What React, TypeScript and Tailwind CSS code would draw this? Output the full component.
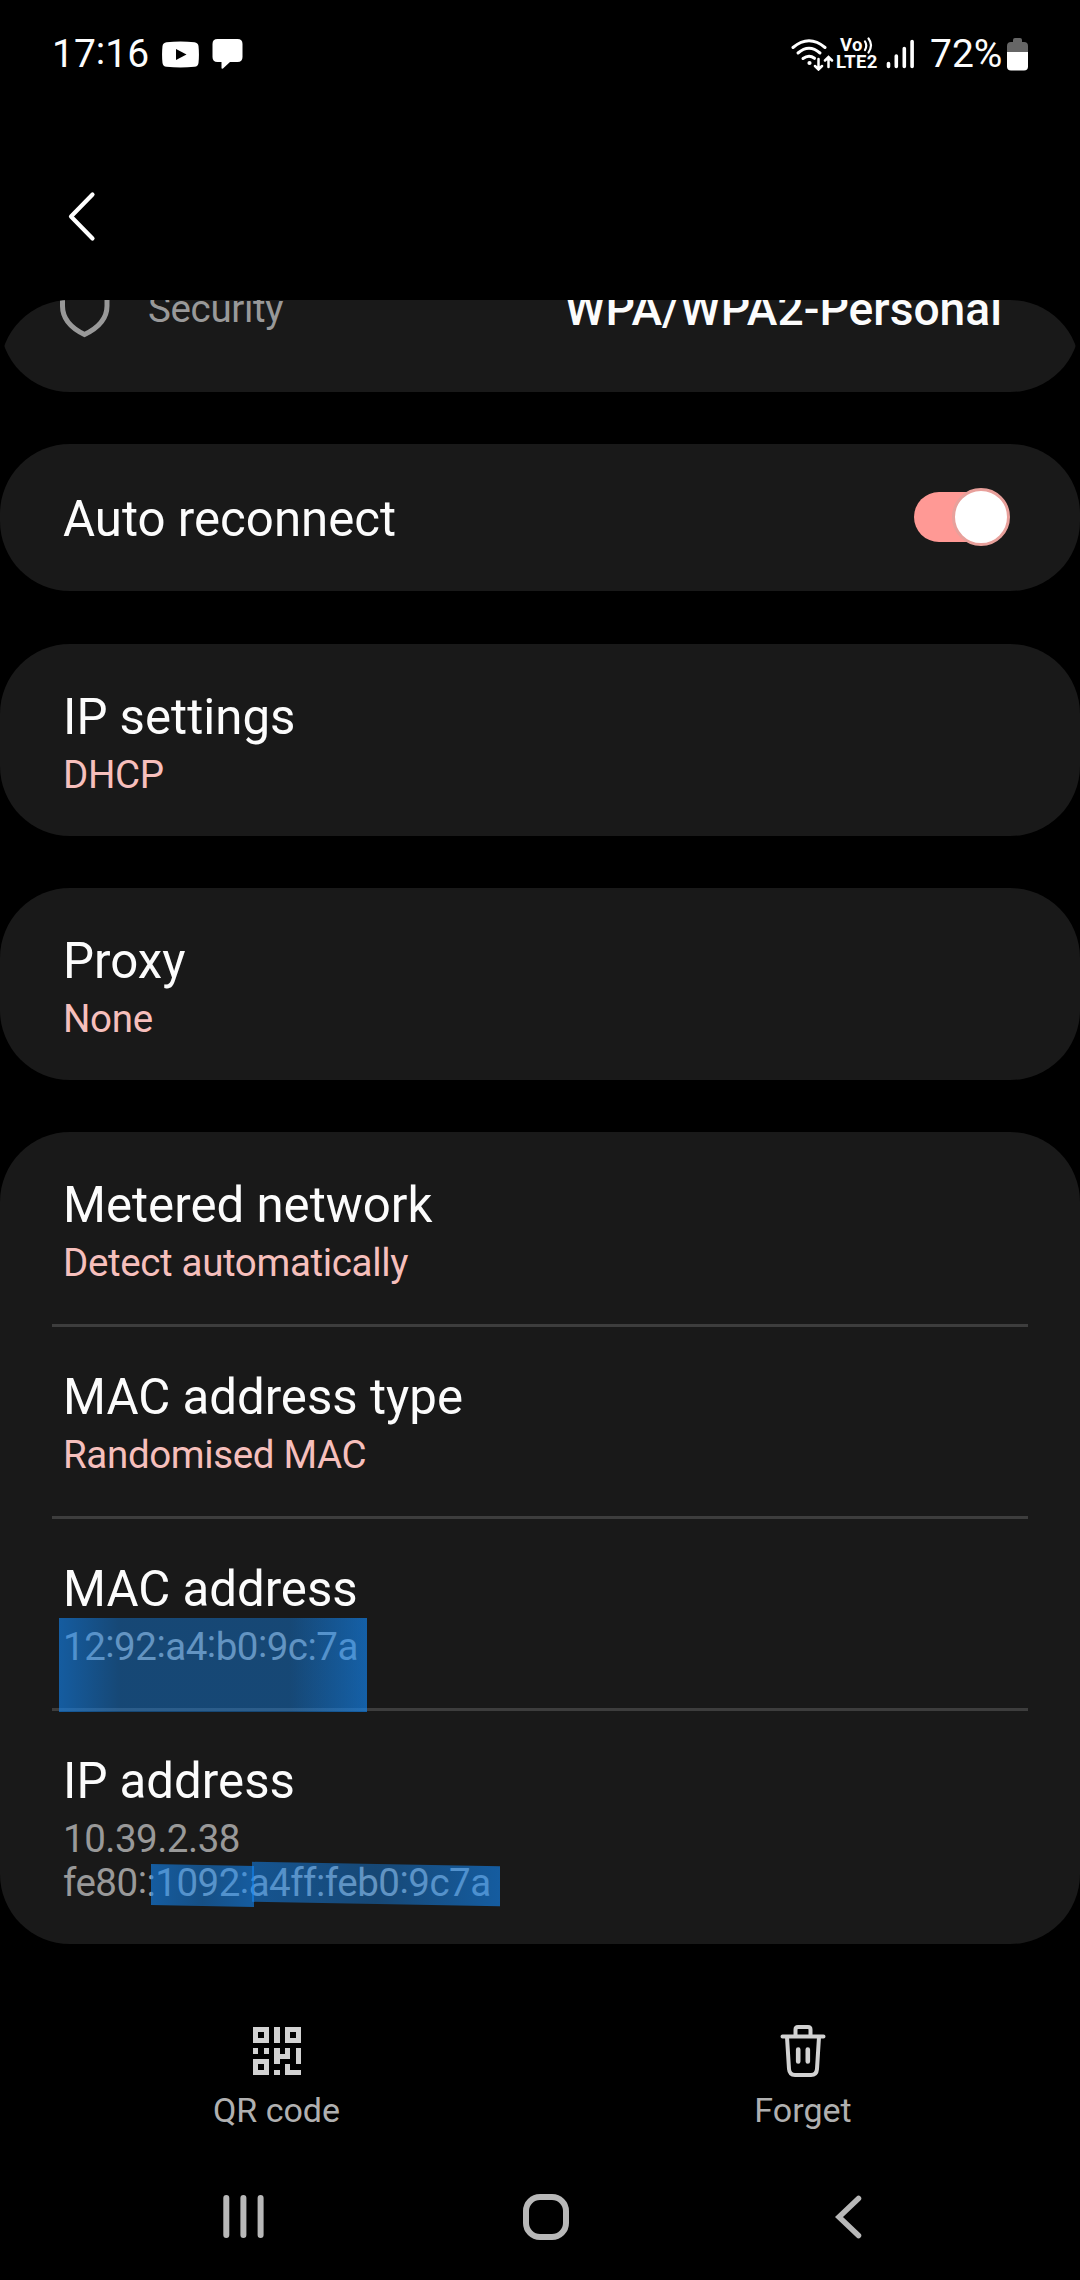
import type { ReactNode } from "react";

const QR_ROWS = [
  "111010111",
  "101010101",
  "111010111",
  "000000000",
  "101010101",
  "000011101",
  "111010001",
  "101000100",
  "111010111",
];

/** Lifts every colon that follows a digit to the middle of the figures. */
function Figures({ text }: { text: string }) {
  return (
    <>
      {text.split(/(?<=\d)(:)/).map((part, i) =>
        i % 2 === 1 ? (
          <span key={i} className="align-[3px] leading-none">
            {part}
          </span>
        ) : (
          part
        ),
      )}
    </>
  );
}

function StatusBar() {
  return (
    <div className="flex h-[108px] items-center justify-between pl-[52px] pr-[52px] text-[39px] leading-[46px]">
      <div className="flex items-center">
        <span className="w-[110px] whitespace-nowrap">
          <Figures text="17:16" />
        </span>
        <svg className="h-[27px] w-[37px]" viewBox="0 0 37 27" fill="none">
          <path
            d="M4.5 1.2Q18.5-.4 32.5 1.2 36 1.6 36.5 5 37.4 13.500 36.500 22 36 25.400 32.500 25.800 18.500 27.400 4.500 25.800 1 25.400.500 22-.4 13.500.500 5 1 1.600 4.500 1.200Z"
            fill="#fff"
          />
          <path d="M14 8v11l10.500-5.500Z" fill="#000" />
        </svg>
        <svg className="ml-[13px] h-[30px] w-[31px]" viewBox="0 0 31 30" fill="#fff">
          <path d="M5.500 0h20Q30.500 0 30.500 5v13q0 5-5 5H18l-7 6.500Q9.500 30 9.500 29v-6h-4q-5 0-5-5V5q0-5 5-5Z" />
        </svg>
      </div>
      <div className="flex items-center">
        <svg className="h-[33px] w-[44px]" viewBox="0 0 44 33" fill="none" stroke="#fff" strokeWidth="3" strokeLinecap="round">
          <path d="M3 9.500Q19 -4 35 9.500" />
          <path d="M8 15Q19 5.500 30 15" />
          <path d="M13 20.500q6-4.500 11.500-.2" />
          <circle cx="19.500" cy="25" r="2.100" fill="#fff" stroke="none" />
          <path d="M28.500 21v10M25 28l3.500 3.500L32 28M38.500 29V19.500M35 22.500l3.500-3.500 3.500 3.500" strokeWidth="2.500" />
        </svg>
        <div className="ml-[2px] flex w-[44px] flex-col text-[18.500px] font-bold leading-[17px] tracking-[0.3px]">
          <div className="flex h-[17px] items-center pl-[4px]">
            <span>Vo</span>
            <svg className="h-[17px] w-[10px]" viewBox="0 0 10 17" fill="none" stroke="#fff" strokeWidth="2.200" strokeLinecap="round">
              <path d="M2 4.500q2.500 4 0 8.500M5.500 1.500q5 6.500 0 14" />
            </svg>
          </div>
          <span>LTE2</span>
        </div>
        <svg className="ml-[6px] h-[30px] w-[30px]" viewBox="0 0 30 30" stroke="#fff" strokeWidth="3.600" strokeLinecap="round">
          <path d="M2.500 24.500v3M10.300 17v10.500M18.300 9.500v18M26.100 2.500v25" />
        </svg>
        <span className="ml-[14px] w-[75px] whitespace-nowrap">72%</span>
        <svg className="ml-[2px] h-[33px] w-[21px]" viewBox="0 0 21 33">
          <path d="M8 0h5q2 0 2 2v2h2q4 0 4 4v7H0V8q0-4 4-4h2V2q0-2 2-2Z" fill="#666" />
          <path d="M0 14h21v14.500q0 4-4 4H4q-4 0-4-4Z" fill="#fff" />
        </svg>
      </div>
    </div>
  );
}

function Card({ children }: { children: ReactNode }) {
  return <section className="rounded-[70px] bg-[#191919]">{children}</section>;
}

function Item({ title, children, divided }: { title: string; children: ReactNode; divided?: boolean }) {
  return (
    <div className="relative h-[192px] px-[63px] pt-[45px]">
      {divided && <hr className="absolute left-[52px] right-[52px] top-0 h-[3px] border-0 bg-[#3d3d3d]" />}
      <h2 className="text-[49.200px] leading-[56px]">{title}</h2>
      <div className="relative mt-[8px] text-[38.500px] leading-[44px] tracking-[-0.350px]">{children}</div>
    </div>
  );
}

function Accent({ children }: { children: ReactNode }) {
  return <p className="text-[#f6bfbc]">{children}</p>;
}

function Address({ children }: { children: string }) {
  return (
    <p className="h-[44px] tracking-[-0.500px] text-[#999]">
      <Figures text={children} />
    </p>
  );
}

export default function App() {
  return (
    <main
      className="flex h-[2280px] w-[1080px] flex-col overflow-hidden bg-black text-[#fcfcfc]"
      style={{ fontFamily: 'Roboto, "Noto Sans", sans-serif' }}
    >
      <StatusBar />
      <header className="h-[192px] pl-[66px] pt-[82px]">
        <svg className="h-[52px] w-[32px]" viewBox="0 0 32 52" fill="none" stroke="#fff" strokeWidth="4.200" strokeLinecap="round" strokeLinejoin="round">
          <path d="M26.500 4.500 5 26.500l21.500 22" />
        </svg>
      </header>

      <div className="flex h-[1644px] flex-col gap-[52px] overflow-hidden rounded-t-[70px]">
        <section className="flex h-[92px] shrink-0 items-start rounded-b-[70px] bg-[#191919] pl-[58px] pr-[78px]">
          <svg className="-mt-[22px] h-[60px] w-[54px]" viewBox="0 0 54 60" fill="none" stroke="#999" strokeWidth="5">
            <path d="M26.500 4 49 11v17c0 13-9 22-22.500 28.500C13 50 4.500 41 4.500 28V11Z" />
          </svg>
          <span className="-mt-[14px] ml-[36px] text-[38.500px] leading-[46px] tracking-[-0.350px] text-[#999]">Security</span>
          <span className="-mt-[19px] ml-auto text-[46.200px] font-medium leading-[56px]">WPA/WPA2-Personal</span>
        </section>

        <Card>
          <div className="flex h-[147px] items-center justify-between pl-[63px] pr-[70px]">
            <h2 className="pt-[3px] text-[49.200px] leading-[56px]">Auto reconnect</h2>
            <div className="mb-px flex h-[58px] w-[96px] items-center">
              <div className="flex h-[50px] w-[94px] items-center justify-end rounded-full bg-[#ff9995]">
                <div className="-mr-[2px] h-[58px] w-[58px] shrink-0 rounded-full border-[3px] border-[#e8a09b] bg-white" />
              </div>
            </div>
          </div>
        </Card>

        <div className="mt-px flex flex-col gap-[52px]">
          <Card>
            <Item title="IP settings">
              <Accent>DHCP</Accent>
            </Item>
          </Card>

          <Card>
            <Item title="Proxy">
              <Accent>None</Accent>
            </Item>
          </Card>

          <Card>
            <Item title="Metered network">
              <Accent>Detect automatically</Accent>
            </Item>
            <Item title="MAC address type" divided>
              <Accent>Randomised MAC</Accent>
            </Item>
            <Item title="MAC address" divided>
              <Address>12:92:a4:b0:9c:7a</Address>
              <div className="absolute -left-[4px] -top-[7px] z-10 h-[94px] w-[308px] bg-linear-to-r from-[#1289fa99] via-[#128dff66] via-20% to-[#128dff66] to-75%">
                <div className="ml-auto h-full w-[78px] bg-linear-to-r from-[#1289fa00] to-[#1289fa60]" />
              </div>
            </Item>
            <div className="h-[236px]">
              <Item title="IP address" divided>
                <Address>10.39.2.38</Address>
                <Address>fe80::1092:a4ff:feb0:9c7a</Address>
                <div className="absolute left-[88px] top-[48px] h-[41px] w-[103px] skew-y-1 bg-linear-to-r from-[#1289fa99] via-[#128dff77] to-[#1289fa99]" />
                <div className="absolute left-[189px] top-[47px] h-[40px] w-[248px] skew-y-1 bg-linear-to-r from-[#1289fa88] via-[#128dff66] to-[#1289fa99]" />
              </Item>
            </div>
          </Card>
        </div>
      </div>

      <div className="flex h-[212px] pt-[80px] text-[34px] leading-[40px] text-[#b0b0b0]">
        <div className="ml-[177px] flex w-[200px] flex-col items-center">
          <svg className="mt-[3px] h-[48px] w-[48px]" viewBox="0 0 9 9" fill="#d2d2d2" shapeRendering="crispEdges">
            {QR_ROWS.flatMap((row, y) =>
              [...row].map((cell, x) => (cell === "1" ? <rect key={`${x}-${y}`} x={x} y={y} width="1" height="1" /> : null)),
            )}
          </svg>
          <span className="mr-px mt-[15px] whitespace-nowrap">QR code</span>
        </div>
        <div className="ml-[326px] flex w-[200px] flex-col items-center">
          <svg className="h-[53px] w-[46px]" viewBox="0 0 46 53" fill="none" stroke="#d2d2d2" strokeWidth="4" strokeLinecap="round" strokeLinejoin="round">
            <path d="M2.500 12.500h41M15.500 12V5.500q0-2.500 2.500-2.500h10q2.500 0 2.500 2.500V12" />
            <path d="m7 13 2 32q.5 6 6 6h16q5.500 0 6-6l2-32" />
            <path d="M18.200 25.500v12M27.800 25.500v12" strokeWidth="4.600" />
          </svg>
          <span className="mt-[13px] whitespace-nowrap">Forget</span>
        </div>
      </div>

      <nav className="flex h-[124px] items-center pb-[3px] pl-[223px]">
        <svg className="h-[43px] w-[41px]" viewBox="0 0 41 43" stroke="#b8b8b8" strokeWidth="6" strokeLinecap="round">
          <path d="M3.300 3v37M20.400 3v37M37.600 3v37" />
        </svg>
        <svg className="ml-[258px] h-[48px] w-[48px]" viewBox="0 0 48 48" fill="none" stroke="#b8b8b8" strokeWidth="6">
          <rect x="4" y="4" width="40" height="40" rx="14" />
        </svg>
        <svg className="ml-[264px] h-[44px] w-[28px]" viewBox="0 0 28 44" fill="none" stroke="#b8b8b8" strokeWidth="5.500" strokeLinecap="round">
          <path d="M24.500 3.500 5 22l19.500 18.500" />
        </svg>
      </nav>
    </main>
  );
}
